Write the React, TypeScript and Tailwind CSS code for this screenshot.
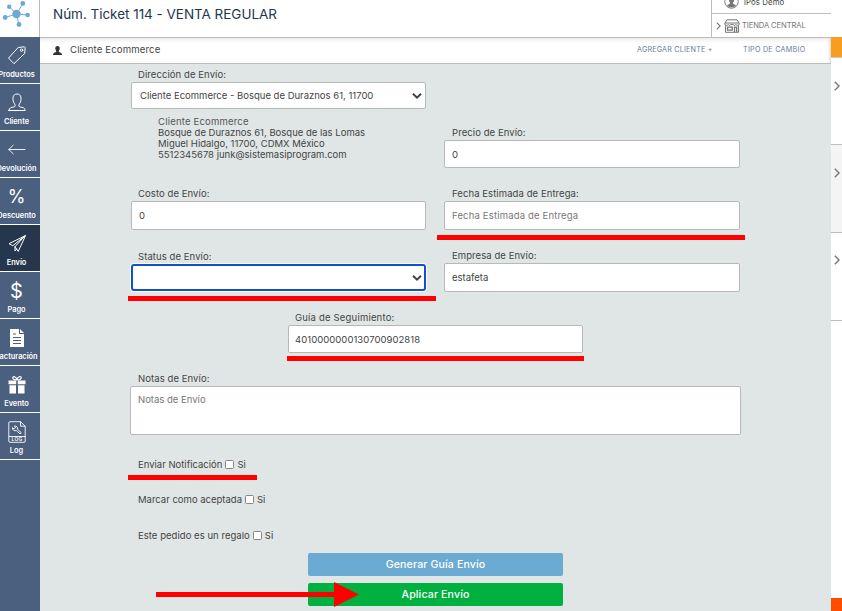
import React from "react";

const Stroke = ({ children, className = "" }: { children: React.ReactNode; className?: string }) => (
  <svg viewBox="0 0 18 20" className={`h-5 w-[18px] ${className}`} fill="none" stroke="currentColor" strokeWidth="1" strokeLinejoin="round" strokeLinecap="round">
    {children}
  </svg>
);

const icons: Record<string, React.ReactNode> = {
  Productos: (
    <Stroke>
      <path d="M10.6 1.4 16.5.8 17.2 1.5 16.7 7.4 6 17.7.8 12.4Z" />
      <circle cx="13.6" cy="4.2" r="1.2" />
    </Stroke>
  ),
  Cliente: (
    <Stroke>
      <path d="M.8 17.5H17.2C17 14.8 14.8 14.4 12.2 14 10.6 13.7 10.5 12 11.5 10.8 12.8 9 13.3 6.7 12.9 4.2 12.6 2 11 1 9 1S5.4 2 5.1 4.2C4.7 6.7 5.2 9 6.5 10.8 7.5 12 7.4 13.7 5.8 14 3.2 14.4 1 14.8.8 17.5Z" />
    </Stroke>
  ),
  Devolución: (
    <Stroke>
      <path d="M17 9.5H.8M5.2 5.2.8 9.5l4.4 4.3" strokeWidth=".9" />
    </Stroke>
  ),
  Descuento: <span className="block text-[18px] leading-5">%</span>,
  Envío: (
    <Stroke>
      <path d="M17.2 1.7 1 9.7 4.8 11.7 17.2 1.7 7 12.7 10 17.1ZM7 12.7V16.9L8.7 15.2" />
    </Stroke>
  ),
  Pago: <span className="block text-[20px] leading-5">$</span>,
  Facturación: (
    <svg viewBox="0 0 14 18" className="mt-px h-[18px] w-[14px]">
      <path d="M0 0H9V5H14V18H0ZM10 0 14 4H10Z" fill="#fff" />
      <path d="M3 5H6M3 8.5H11M3 11.5H11M3 14.5H11" stroke="#4b5f7e" strokeWidth="1.1" />
    </svg>
  ),
  Evento: (
    <svg viewBox="0 0 18 19" className="h-[19px] w-[18px]">
      <path d="M.5 5.5H17.5V9.3H.5ZM1.5 10.2H8V18.5H1.5ZM10 10.2H16.5V18.5H10Z" fill="#fff" />
      <path d="M8.8 5C7 5 4.8 4.6 4.8 2.8S8.3 1 8.8 5C9.3 1 13.2 1 13.2 2.8S11 5 8.8 5Z" fill="none" stroke="#fff" strokeWidth="1.2" />
      <path d="M8.2 5.5H9.8V18.5H8.2Z" fill="#4b5f7e" />
    </svg>
  ),
  Log: (
    <svg viewBox="0 0 18 22" className="-mt-px h-[22px] w-[18px]" fill="none" stroke="#fff" strokeWidth=".9">
      <path d="M12.5.7H2Q.8.7.8 2V20Q.8 21.3 2 21.3H16Q17.2 21.3 17.2 20V5.2ZM12.5.7V5.2H17.2M.8 15.5H17.2" />
      <path d="M4.5 6.6 6.2 8 7.5 6.8 6.4 5C8.5 4.6 10 6.2 9.4 8.3L13 11.4Q13.4 12.8 12 12.8L8.3 9.6C6.2 10.4 4 8.8 4.5 6.6Z" />
      <text x="9" y="20.2" fontSize="5" fontWeight="600" textAnchor="middle" fill="#fff" stroke="none" letterSpacing=".3">LOG</text>
    </svg>
  ),
};

const NavItem = ({ name }: { name: string }) => (
  <div className={`h-[47px] border-b border-white ${name === "Envío" ? "bg-[#25364d]" : ""}`}>
    <div className="flex w-[33px] flex-col items-center pt-[9px]">
      <div className="h-[23px]">{icons[name]}</div>
      <span className="whitespace-nowrap text-[7.4px] leading-3 font-semibold">{name}</span>
    </div>
  </div>
);

const Label = ({ children, className = "pl-[7px]" }: { children: React.ReactNode; className?: string }) => (
  <label className={`block h-[14px] text-[9.5px] leading-[14px] tracking-[0.08px] ${className}`}>{children}</label>
);

const box = "block w-full rounded-[2px] border border-[#b8b8b8] bg-white text-[9.5px] text-[#444] outline-none placeholder:text-[#777]";

const Caret = () => (
  <svg viewBox="0 0 10 7" className="pointer-events-none absolute top-1/2 right-1 h-[7px] w-[10px] -translate-y-1/2" fill="none" stroke="#444" strokeWidth="2">
    <path d="M1 1.2 5 5.2 9 1.2" />
  </svg>
);

const Check = ({ children, className = "" }: { children: string; className?: string }) => (
  <label className={`flex h-[14px] items-center pl-2 text-[9.5px] leading-[14px] ${className}`}>
    {children}
    <input type="checkbox" className="mr-[3px] mb-px ml-[3px] size-[9px] appearance-none rounded-[1.5px] border border-[#858585] bg-white" />
    Si
  </label>
);

const Chevron = ({ size = "h-[10px] w-[6px]" }: { size?: string }) => (
  <svg viewBox="0 0 6 10" className={`shrink-0 ${size}`} fill="none" stroke="#777" strokeWidth="1.4">
    <path d="M.8.8 5 5 .8 9.2" />
  </svg>
);

const Underline = ({ className }: { className: string }) => <div className={`absolute h-[5px] bg-[#f00] ${className}`} />;

export default function App() {
  return (
    <div className="relative flex h-[611px] w-[842px] overflow-hidden bg-white font-['Inter','Liberation_Sans',sans-serif] text-[#444]">
      <aside className="flex w-10 shrink-0 flex-col overflow-hidden text-white">
        <div className="h-[37px] border-r border-[#bbb] bg-white">
          <svg viewBox="0 0 39 37" className="h-[37px] w-[39px]" fill="#6aaad3" stroke="#6aaad3">
            <path d="M16.5 14 9 6.5M16.5 14 23 3.5M16.5 14 5 17.5M16.5 14 27.5 15M16.5 14 19 24.5" strokeWidth="1" />
            <g stroke="none">
              <circle cx="16.5" cy="14" r="4.2" />
              <circle cx="9.2" cy="6.8" r="2.2" />
              <circle cx="22.8" cy="3.4" r="2.4" />
              <circle cx="5.2" cy="17.5" r="2.4" />
              <circle cx="27.6" cy="15" r="2.3" />
              <circle cx="19" cy="24.5" r="2.4" />
            </g>
          </svg>
        </div>
        <nav className="flex-1 bg-[#4b5f7e]">
          {Object.keys(icons).map((n) => <NavItem key={n} name={n} />)}
        </nav>
      </aside>

      <div className="flex w-[791px] shrink-0 flex-col">
        <header className="flex h-[38px] shrink-0 border-b border-[#bdbdbd]">
          <h1 className="flex-1 pt-1 pl-[13px] text-[13.5px] leading-5 tracking-[-0.03px] text-[#25364d]">Núm. Ticket 114 - VENTA REGULAR</h1>
          <div className="w-[120px] overflow-hidden border-l border-[#bdbdbd]">
            <div className="flex h-[14px] items-end border-b border-[#bdbdbd] pl-3">
              <svg viewBox="0 0 16 16" className="mb-[4px] h-[15px] w-[15px] shrink-0">
                <circle cx="8" cy="8" r="7.2" fill="#fff" stroke="#777" />
                <path d="M8 3C10 3 11 4.5 10.8 6.5 10.6 8 10 8.8 9.5 9.6 9.6 11 12 11 12.8 12.3 10.5 15 5.5 15 3.2 12.3 4 11 6.4 11 6.5 9.6 6 8.8 5.4 8 5.2 6.5 5 4.5 6 3 8 3Z" fill="#777" />
              </svg>
              <span className="mb-[6px] ml-[5px] text-[7.8px] leading-[10px] tracking-[0.1px] whitespace-nowrap">iPos Demo</span>
            </div>
            <div className="flex h-[23px] items-center pl-1">
              <Chevron size="h-2 w-[5px]" />
              <svg viewBox="0 0 16 14" className="ml-[3px] h-[14px] w-4 shrink-0" fill="none" stroke="#777" strokeWidth="1">
                <path d="M3 .8H13L15.3 4.5 14.8 6 13.2 6.4 11.8 5.6 10.4 6.4 9 5.6H7L5.6 6.4 4.2 5.6 2.8 6.4 1.2 6 .7 4.5ZM.7 4H15.3M1.5 6.5V13.3H14.5V6.5" />
                <path d="M3.5 8.2H8.2V11.2H3.5ZM10.5 13V8.2H12.7V13" strokeWidth="1.3" />
              </svg>
              <span className="ml-[2px] text-[7.6px] tracking-[-0.1px] whitespace-nowrap text-[#777]">TIENDA CENTRAL</span>
            </div>
          </div>
        </header>
        <div className="flex h-[26px] shrink-0 items-center border-b border-[#bdbdbd] bg-linear-to-b from-[#eee] to-white to-20% pl-[13px] shadow-[inset_-3px_0_3px_-2px_#ccc]">
          <svg viewBox="0 0 9 9" className="mb-px h-[9px] w-[9px]" fill="#333">
            <path d="M4.5 0C6 0 6.8 1 6.7 2.5 6.6 4 6 4.5 5.7 5.3 5.6 6.5 8.8 6 9 9H0C.2 6 3.4 6.5 3.3 5.3 3 4.5 2.4 4 2.3 2.5 2.2 1 3 0 4.5 0Z" />
          </svg>
          <span className="ml-[8px] flex-1 text-[9.6px] tracking-[0.13px]">Cliente Ecommerce</span>
          <span className="w-[106px] text-[7.2px] tracking-[0.18px] text-[#6b7d9b]">AGREGAR CLIENTE +</span>
          <span className="w-[88px] text-[7.2px] tracking-[0.25px] text-[#6b7d9b]">TIPO DE CAMBIO</span>
        </div>

        <main className="flex-1 bg-[#e0e6e6] pt-1 pl-[90px]">
          <div className="flex gap-[18px] pl-px">
            <section className="w-[295px]">
              <Label>Dirección de Envío:</Label>
              <div className="relative">
                <select className={`${box} h-[27px] appearance-none pt-px pl-2`}>
                  <option>Cliente Ecommerce - Bosque de Duraznos 61, 11700</option>
                </select>
                <Caret />
              </div>
              <address className="mt-[7px] h-[71px] pl-[27px] text-[9.5px] leading-[11px] whitespace-nowrap not-italic">
                <span className="tracking-[0.2px] text-[#555]">Cliente Ecommerce</span><br />
                Bosque de Duraznos 61, Bosque de las Lomas<br />
                Miguel Hidalgo, 11700, CDMX México<br />
                5512345678 junk@sistemasiprogram.com
              </address>
              <Label>Costo de Envío:</Label>
              <input className={`${box} h-[29px] px-[7px]`} defaultValue="0" />
              <Label className="mt-5 pl-[7px]">Status de Envío:</Label>
              <div className="relative">
                <select className="block h-[27px] w-full appearance-none rounded-[3px] border-2 border-[#1052cc] bg-white shadow-[0_0_0_1px_#fff] outline-none">
                  <option></option>
                </select>
                <Caret />
              </div>
            </section>
            <section className="w-[296px] pt-[58px]">
              <Label className="pl-[8px]">Precio de Envío:</Label>
              <input className={`${box} h-[28px] px-[7px]`} defaultValue="0" />
              <Label className="mt-[19px] pl-[8px]">Fecha Estimada de Entrega:</Label>
              <input className={`${box} h-[29px] px-[7px] tracking-[0.17px]`} placeholder="Fecha Estimada de Entrega" />
              <Label className="mt-[19px] pl-[8px]">Empresa de Envío:</Label>
              <input className={`${box} h-[29px] px-[7px]`} defaultValue="estafeta" />
            </section>
          </div>
          <div className="mt-[19px] ml-[158px] w-[295px]">
            <Label><span className="tracking-[0.19px]">Guía de Seguimiento:</span></Label>
            <input className={`${box} h-[28px] px-[6px] tracking-[0.05px]`} defaultValue="4010000000130700902818" />
          </div>
          <div className="mt-[19px] w-[611px]">
            <Label className="pl-[8px]">Notas de Envío:</Label>
            <textarea className={`${box} h-[49px] resize-none px-[7px] py-[6px] leading-[14px]`} placeholder="Notas de Envío" />
          </div>
          <Check className="mt-[23px]">Enviar Notificación</Check>
          <Check className="mt-[21px]">Marcar como aceptada</Check>
          <Check className="mt-[22px] tracking-[0.04px]">Este pedido es un regalo</Check>
          <div className="mt-[10px] ml-[178px] flex w-[255px] flex-col gap-[7px] text-[10.6px] font-medium tracking-[0.13px] text-white">
            <button className="h-[23px] rounded-[2px] bg-[#6aaad3]">Generar Guía Envío</button>
            <button className="h-[23px] rounded-[2px] bg-[#00b140]">Aplicar Envío</button>
          </div>
        </main>
      </div>

      <aside className="flex w-[11px] shrink-0 flex-col overflow-hidden pt-[37px]">
        <div className="h-[21px] border-b border-[#ccc] bg-[#f99d1f]" />
        <div className="h-[87px] border-b border-[#bdbdbd] pt-[23px] pl-[3px]"><Chevron /></div>
        <div className="h-[88px] border-b border-[#bdbdbd] bg-[#f4f4f4] pt-[23px] pl-[3px]"><Chevron /></div>
        <div className="h-[88px] border-b border-[#bdbdbd] pt-[22px] pl-[3px]"><Chevron /></div>
        <div className="mt-auto h-[13px] bg-[#ff4d00]" />
      </aside>

      <Underline className="top-[235px] left-[437px] w-[308px]" />
      <Underline className="top-[296px] left-[128px] w-[308px]" />
      <Underline className="top-[356px] left-[287px] w-[297px]" />
      <Underline className="top-[475px] left-[128px] w-[129px]" />
      <svg viewBox="0 0 203 26" className="absolute top-[582px] left-[156px] h-[26px] w-[203px]" fill="#f00">
        <path d="M0 10H178V0L203 12.5 178 25V15H0Z" />
      </svg>
    </div>
  );
}
